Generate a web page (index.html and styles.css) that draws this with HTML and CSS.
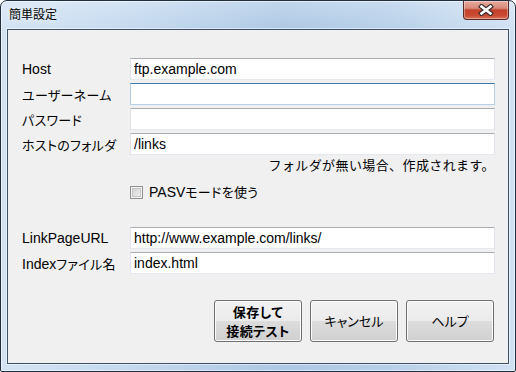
FILE: index.html
```html
<!DOCTYPE html>
<html lang="ja">
<head>
    <meta charset="UTF-8">
    <title>簡単設定</title>
    <link rel="stylesheet" href="styles.css">
</head>
<body>
    <div class="window">
        <div class="titlebar">
            <span class="title">簡単設定</span>
            <span class="close">
                <svg width="16" height="12" viewBox="0 0 16 12">
                    <path d="M3.5 2.5 L12.5 9.5 M12.5 2.5 L3.5 9.5" stroke="#3a2a2a" stroke-width="4.8" stroke-linecap="square" fill="none"/>
                    <path d="M3.5 2.5 L12.5 9.5 M12.5 2.5 L3.5 9.5" stroke="#ffffff" stroke-width="2.6" stroke-linecap="square" fill="none"/>
                </svg>
            </span>
        </div>

        <div class="client">
            <div class="fields">
                <label>Host</label>
                <input class="textbox" type="text" value="ftp.example.com">
                <label><span class="ja">ユーザーネーム</span></label>
                <input class="textbox focused" type="text" value="">
                <label><span class="ja">パスワード</span></label>
                <input class="textbox" type="password" value="">
                <label><span class="ja">ホストのフォルダ</span></label>
                <input class="textbox" type="text" value="/links">
            </div>

            <p class="note">フォルダが無い場合、作成されます。</p>

            <div class="check-row">
                <span class="checkbox"></span>
                <span>PASV<span class="ja">モードを使う</span></span>
            </div>

            <div class="fields fields-link">
                <label>LinkPageURL</label>
                <input class="textbox" type="text" value="http://www.example.com/links/">
                <label>Index<span class="ja">ファイル名</span></label>
                <input class="textbox" type="text" value="index.html">
            </div>

            <div class="buttons">
                <button class="btn btn-default">保存して<br>接続テスト</button>
                <button class="btn">キャンセル</button>
                <button class="btn">ヘルプ</button>
            </div>
        </div>
    </div>
</body>
</html>
```

FILE: styles.css
```css
body {
    margin: 0;
    font-family: "Liberation Sans", "Noto Sans CJK JP", sans-serif;
    font-size: 14px;
    color: #000;
    background-color: #fff;
}
.window {
    width: 516px;
    height: 372px;
    box-sizing: border-box;
    border: 1px solid #1f2f40;
    border-radius: 7px 7px 2px 2px;
    padding: 0 6px 7px 6px;
    background:
        linear-gradient(to bottom, rgba(255, 255, 255, 0.25), rgba(255, 255, 255, 0) 30px),
        linear-gradient(to right, #d3e3f4 0%, #c4d9ef 25%, #adc8e5 55%, #b6cfe9 75%, #d0e1f3 100%);
    box-shadow: inset 0 0 0 1px rgba(255, 255, 255, 0.55);
    display: flex;
    flex-direction: column;
}
.titlebar {
    height: 28px;
    display: flex;
    justify-content: space-between;
    align-items: flex-start;
}
.title {
    font-family: "Noto Sans CJK JP", sans-serif;
    font-size: 12px;
    line-height: 16px;
    padding: 5px 0 0 2px;
    text-shadow: 0 0 6px rgba(255, 255, 255, 0.9);
}
.close {
    width: 46px;
    height: 19px;
    box-sizing: border-box;
    border: 1px solid #5b2a22;
    border-top: none;
    border-radius: 0 0 4px 4px;
    background: linear-gradient(to bottom, #e8aa9e 0%, #d88a7a 40%, #c3412b 50%, #c94a33 80%, #d9745a 100%);
    box-shadow: inset 0 0 0 1px rgba(255, 255, 255, 0.35);
    display: flex;
    align-items: center;
    justify-content: center;
}
.client {
    flex: 1;
    box-sizing: border-box;
    border: 1px solid #3e5166;
    background-color: #f0f0f0;
    padding: 28px 13px 0 14px;
    box-shadow: 0 0 0 1px rgba(255, 255, 255, 0.5);
}
.ja {
    font-family: "Noto Sans CJK JP", sans-serif;
    font-size: 13px;
    font-feature-settings: "palt";
    letter-spacing: 0.3px;
}
.fields {
    display: grid;
    grid-template-columns: 108px 1fr;
    grid-auto-rows: 22px;
    row-gap: 3px;
    align-items: center;
}
.fields label {
    white-space: nowrap;
    font-size: 14px;
}
.textbox {
    height: 22px;
    width: 100%;
    box-sizing: border-box;
    margin: 0;
    padding: 0 3px;
    border: 1px solid #e2e3ea;
    border-top-color: #abadb3;
    border-bottom-color: #e3e9ef;
    background: #fff;
    font-family: "Liberation Sans", "Noto Sans CJK JP", sans-serif;
    font-size: 14px;
    color: #000;
    outline: none;
}
.textbox.focused {
    border-color: #b5cfe7;
    border-top-color: #3d7bad;
}
.note {
    margin: 2px 0 0 0;
    padding-right: 0;
    line-height: 16px;
    text-align: right;
    font-family: "Noto Sans CJK JP", sans-serif;
    font-size: 13px;
    letter-spacing: 0.4px;
}
.check-row {
    margin-top: 12px;
    height: 14px;
    padding-left: 108px;
    display: flex;
    align-items: center;
    gap: 6px;
    line-height: 14px;
}
.checkbox {
    width: 13px;
    height: 13px;
    box-sizing: border-box;
    border: 1px solid #8e8f8f;
    background: linear-gradient(135deg, #cbcbcb, #f6f6f6);
    box-shadow: inset 0 0 0 1px #f4f4f4, inset 0 0 0 2px #c5c5c5;
}
.fields-link {
    margin-top: 28px;
}
.buttons {
    margin-top: 26px;
    padding-right: 1px;
    display: flex;
    justify-content: flex-end;
    gap: 8px;
}
.btn {
    width: 88px;
    height: 42px;
    padding: 0;
    border: 1px solid #707070;
    border-radius: 3px;
    background: linear-gradient(to bottom, #f2f2f2 0%, #ebebeb 50%, #dddddd 51%, #cfcfcf 100%);
    box-shadow: inset 0 0 0 1px #fbfbfb;
    font-family: "Noto Sans CJK JP", sans-serif;
    font-size: 13px;
    font-feature-settings: "palt";
    line-height: 16px;
    color: #000;
}
.btn-default {
    font-size: 13px;
    font-weight: bold;
    line-height: 19px;
    letter-spacing: 0.5px;
}
```
